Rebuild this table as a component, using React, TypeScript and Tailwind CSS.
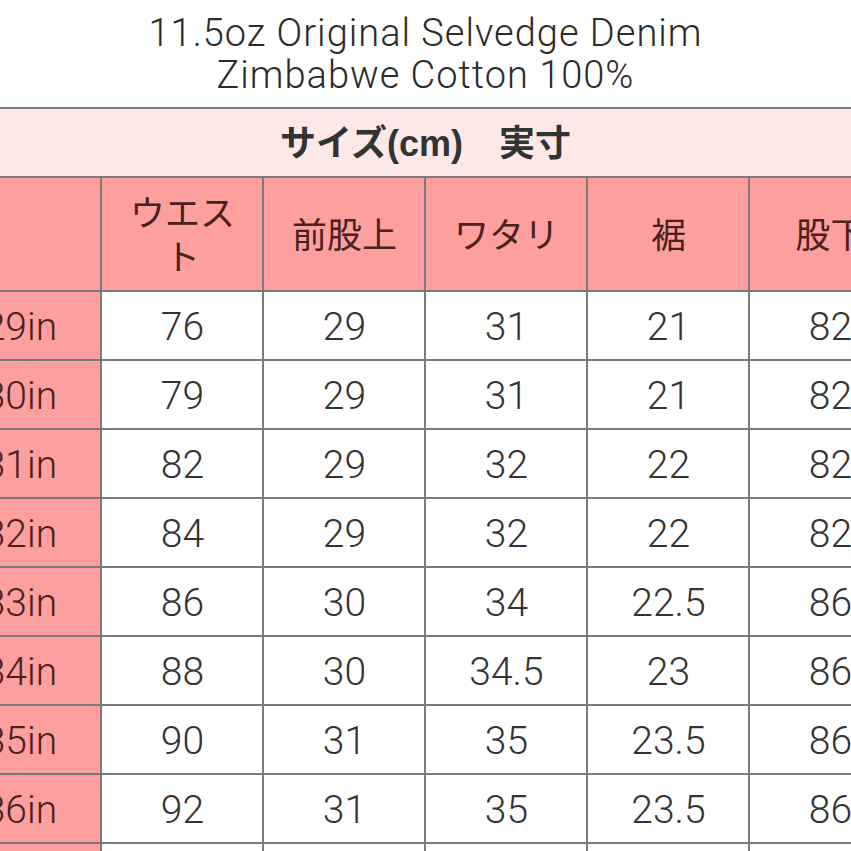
import React from "react";

const rows: [string, string, string, string, string, string][] = [
  ["29in", "76", "29", "31", "21", "82"],
  ["30in", "79", "29", "31", "21", "82"],
  ["31in", "82", "29", "32", "22", "82"],
  ["32in", "84", "29", "32", "22", "82"],
  ["33in", "86", "30", "34", "22.5", "86"],
  ["34in", "88", "30", "34.5", "23", "86"],
  ["35in", "90", "31", "35", "23.5", "86"],
  ["36in", "92", "31", "35", "23.5", "86"],
  ["38in", "96", "31", "36", "24", "86"],
];

const heads = ["ウエスト", "前股上", "ワタリ", "裾", "股下"];

export default function App() {
  return (
    <div
      className="w-[851px] h-[851px] overflow-hidden bg-white"
      style={{ fontFamily: 'Roboto, "Noto Sans CJK JP", sans-serif' }}
    >
      <div className="pt-[12px] pb-[11px] text-center text-[38px] leading-[42px] font-light text-[#2b2b2b] tracking-[1px]">
        <div>11.5oz Original Selvedge Denim</div>
        <div>Zimbabwe Cotton 100%</div>
      </div>

      <div className="flex justify-center">
        <table className="w-[972px] shrink-0 table-fixed border-collapse">
          <colgroup>
            <col className="w-[162px]" />
            <col className="w-[162px]" />
            <col className="w-[162px]" />
            <col className="w-[162px]" />
            <col className="w-[162px]" />
            <col className="w-[162px]" />
          </colgroup>
          <thead>
            <tr>
              <th
                colSpan={6}
                className="h-[69px] pt-[3px] bg-[#fde8e8] border-2 border-[#7a7a7a] text-[36px] font-bold text-[#333]"
                style={{ fontFamily: '"Liberation Sans", "Noto Sans CJK JP", sans-serif' }}
              >
                サイズ(cm)　実寸
              </th>
            </tr>
            <tr>
              <th className="h-[114px] bg-[#fd9f9f] border-2 border-[#7a7a7a]" />
              {heads.map((h) => (
                <th
                  key={h}
                  className="h-[114px] pt-[5px] bg-[#fd9f9f] border-2 border-[#7a7a7a] px-[26px] text-[35px] leading-[44px] font-normal text-[#4a2020]"
                >
                  {h}
                </th>
              ))}
            </tr>
          </thead>
          <tbody>
            {rows.map((r) => (
              <tr key={r[0]}>
                <td className="h-[69px] pt-[3px] bg-[#fd9f9f] border-2 border-[#7a7a7a] text-center text-[39px] font-light text-[#4a2020]">
                  {r[0]}
                </td>
                {r.slice(1).map((v, i) => (
                  <td
                    key={i}
                    className="h-[69px] pt-[3px] bg-white border-2 border-[#7a7a7a] text-center text-[39px] font-light text-[#333]"
                  >
                    {v}
                  </td>
                ))}
              </tr>
            ))}
          </tbody>
        </table>
      </div>
    </div>
  );
}
